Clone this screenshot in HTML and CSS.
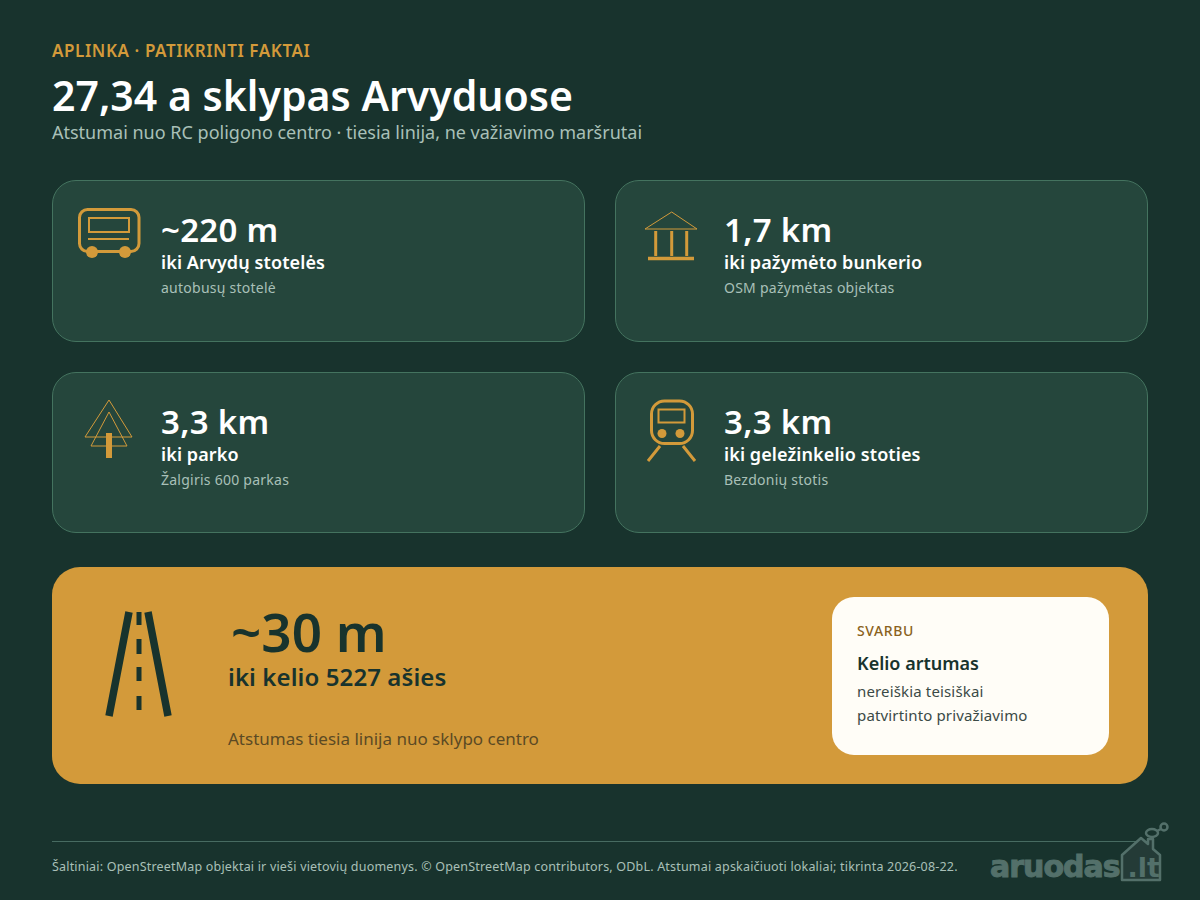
FILE: index.html
```html
<!DOCTYPE html>
<html lang="lt">
<head>
  <meta charset="UTF-8" />
  <title>27,34 a sklypas Arvyduose</title>
  <link rel="stylesheet" href="styles.css">
</head>
<body>
  <div class="page">
    <div class="header">
      <div class="eyebrow">APLINKA · PATIKRINTI FAKTAI</div>
      <h1>27,34 a sklypas Arvyduose</h1>
      <p class="subtitle">Atstumai nuo RC poligono centro · tiesia linija, ne važiavimo maršrutai</p>
    </div>

    <div class="cards">
      <div class="card">
        <svg class="icon" viewBox="0 0 64 54" width="64" height="54">
          <rect x="2.500" y="2.500" width="59.500" height="42" rx="8" fill="none" stroke="#d39a3a" stroke-width="3" />
          <rect x="12" y="11" width="40" height="14" fill="none" stroke="#d39a3a" stroke-width="2" />
          <path d="M11 32H52" stroke="#d39a3a" stroke-width="2" />
          <circle cx="15" cy="45" r="6" fill="#d39a3a" />
          <circle cx="48" cy="45" r="6" fill="#d39a3a" />
        </svg>
        <div class="card-text">
          <div class="value">~220 m</div>
          <div class="label">iki Arvydų stotelės</div>
          <div class="note">autobusų stotelė</div>
        </div>
      </div>

      <div class="card">
        <svg class="icon" viewBox="0 0 64 54" width="64" height="54">
          <path d="M5 22L31.700 5L57 22Z" fill="none" stroke="#d39a3a" stroke-width="1" />
          <path d="M15.700 24V49M31.700 24V49M46.700 24V49" stroke="#d39a3a" stroke-width="3" />
          <path d="M8 51.500H54" stroke="#d39a3a" stroke-width="3.500" />
        </svg>
        <div class="card-text">
          <div class="value">1,7 km</div>
          <div class="label">iki pažymėto bunkerio</div>
          <div class="note">OSM pažymėtas objektas</div>
        </div>
      </div>

      <div class="card">
        <svg class="icon" viewBox="0 0 64 64" width="64" height="64">
          <path d="M32 1L55 38H8Z" fill="none" stroke="#d39a3a" stroke-width="1" />
          <path d="M32 13L50 47H14Z" fill="none" stroke="#d39a3a" stroke-width="1" />
          <rect x="29" y="34" width="6" height="25" fill="#d39a3a" />
        </svg>
        <div class="card-text">
          <div class="value">3,3 km</div>
          <div class="label">iki parko</div>
          <div class="note">Žalgiris 600 parkas</div>
        </div>
      </div>

      <div class="card">
        <svg class="icon" viewBox="0 0 64 64" width="64" height="64">
          <rect x="11.500" y="2" width="41" height="42.500" rx="13" fill="none" stroke="#d39a3a" stroke-width="3" />
          <rect x="18.500" y="10.500" width="26" height="13" fill="none" stroke="#d39a3a" stroke-width="2" />
          <circle cx="22" cy="34.500" r="4.500" fill="#d39a3a" />
          <circle cx="40" cy="34.500" r="4.500" fill="#d39a3a" />
          <path d="M20 47L8 62M43 47L55 62" stroke="#d39a3a" stroke-width="3" />
        </svg>
        <div class="card-text">
          <div class="value">3,3 km</div>
          <div class="label">iki geležinkelio stoties</div>
          <div class="note">Bezdonių stotis</div>
        </div>
      </div>
    </div>

    <div class="hero">
      <svg class="hero-icon" viewBox="0 0 68 108" width="68" height="108">
        <path d="M25 1L5 105M44 1L64 105" stroke="#18332d" stroke-width="7.500" />
        <path d="M35 1V14M35 28V43M35 56V70M35 85V99" stroke="#18332d" stroke-width="5" />
      </svg>
      <div class="hero-text">
        <div class="hero-value">~30 m</div>
        <div class="hero-label">iki kelio 5227 ašies</div>
        <div class="hero-note">Atstumas tiesia linija nuo sklypo centro</div>
      </div>
      <div class="notice">
        <div class="notice-tag">SVARBU</div>
        <div class="notice-title">Kelio artumas</div>
        <div class="notice-body">nereiškia teisiškai<br>patvirtinto privažiavimo</div>
      </div>
    </div>

    <div class="footer">Šaltiniai: OpenStreetMap objektai ir vieši vietovių duomenys. © OpenStreetMap contributors, ODbL. Atstumai apskaičiuoti lokaliai; tikrinta 2026-08-22.</div>
  </div>

  <!-- watermark -->
  <div class="watermark">
    <svg class="wm-house" viewBox="0 0 52 62" width="52" height="62">
      <path d="M2 58V33L21 16L28 22V17H33V27L40 33V58Z" fill="#243b37" stroke="#53706a" stroke-width="2.500" stroke-linejoin="round" />
      <ellipse cx="32" cy="11" rx="6" ry="4" fill="none" stroke="#53706a" stroke-width="2.500" />
      <circle cx="44" cy="5" r="3.500" fill="none" stroke="#53706a" stroke-width="2.500" />
      <path d="M37 9L41 7" stroke="#53706a" stroke-width="2.500" />
    </svg>
    <span class="wm-name">aruodas</span><span class="wm-tld">.lt</span>
  </div>
</body>
</html>
```

FILE: styles.css
```css
html, body {
  margin: 0;
  padding: 0;
}
body {
  width: 1200px;
  height: 900px;
  background: #18332d;
  font-family: "Noto Sans", sans-serif;
  overflow: hidden;
  position: relative;
}
.page {
  padding: 40px 52px 0;
}

/* Header */
.eyebrow {
  color: #d39a3a;
  font-size: 17px;
  line-height: 22px;
  font-weight: 600;
  letter-spacing: 0.6px;
}
h1 {
  margin: 8px 0 0;
  color: #fff;
  font-size: 41px;
  line-height: 50px;
  font-weight: 600;
}
.subtitle {
  margin: 0;
  color: #a9c0b8;
  font-size: 18px;
  line-height: 24px;
}

/* Cards */
.cards {
  display: grid;
  grid-template-columns: 533px 533px;
  grid-auto-rows: 161.500px;
  gap: 30px;
  margin-top: 36px;
}
.card {
  display: flex;
  box-sizing: border-box;
  background: #25463c;
  border: 1px solid #44735f;
  border-radius: 24px;
  padding: 26px 24px;
}
.icon {
  flex: none;
}
.card-text {
  margin-left: 20px;
  padding-top: 3px;
}
.value {
  color: #fff;
  font-size: 33px;
  line-height: 40px;
  font-weight: 600;
  letter-spacing: 0.3px;
}
.label {
  color: #fff;
  font-size: 18px;
  line-height: 24px;
  font-weight: 600;
  letter-spacing: 0.1px;
}
.note {
  margin-top: 3px;
  color: #a9c0b8;
  font-size: 14px;
  line-height: 22px;
  letter-spacing: 0.25px;
}

/* Highlight */
.hero {
  display: flex;
  align-items: flex-start;
  box-sizing: border-box;
  height: 217px;
  margin-top: 34px;
  background: #d39a3a;
  border-radius: 28px;
  padding: 30px 39px 30px 52px;
}
.hero-icon {
  flex: none;
  margin-top: 14px;
}
.hero-text {
  flex: 1;
  margin-left: 56px;
}
.hero-value {
  color: #18332d;
  font-size: 53px;
  line-height: 62px;
  font-weight: 600;
  margin: 4px 0 0 3px;
}
.hero-label {
  color: #18332d;
  font-size: 24px;
  line-height: 28px;
  font-weight: 600;
  letter-spacing: 0.1px;
}
.hero-note {
  margin-top: 37px;
  color: #5b4a24;
  font-size: 17px;
  line-height: 22px;
}
.notice {
  box-sizing: border-box;
  width: 277px;
  height: 158px;
  background: #fffdf7;
  border-radius: 22px;
  padding: 24px 25px;
}
.notice-tag {
  color: #8a6220;
  font-size: 14px;
  line-height: 20px;
  font-weight: 500;
  letter-spacing: 0.6px;
}
.notice-title {
  margin-top: 9px;
  color: #18332d;
  font-size: 18px;
  line-height: 26px;
  font-weight: 600;
}
.notice-body {
  margin-top: 3px;
  color: #3b4a46;
  font-size: 15px;
  line-height: 24px;
  letter-spacing: 0.15px;
}

/* Footer */
.footer {
  margin-top: 57px;
  border-top: 1px solid #476b61;
  padding-top: 16px;
  color: #a9c0b8;
  font-size: 12.500px;
  line-height: 18px;
  letter-spacing: 0.19px;
}

/* Watermark sits over the footer corner */
.watermark {
  position: absolute;
  left: 990px;
  top: 852px;
  width: 172px;
  height: 30px;
  font-family: "DejaVu Sans", sans-serif;
  font-weight: 700;
  line-height: 30px;
  white-space: nowrap;
}
.wm-house {
  position: absolute;
  left: 130px;
  top: -30px;
}
.wm-name, .wm-tld {
  position: relative;
  color: #53706a;
}
.wm-name {
  font-size: 30px;
  letter-spacing: -1px;
  -webkit-text-stroke: 1px #53706a;
}
.wm-tld {
  font-size: 27px;
  margin-left: 8px;
}
```
